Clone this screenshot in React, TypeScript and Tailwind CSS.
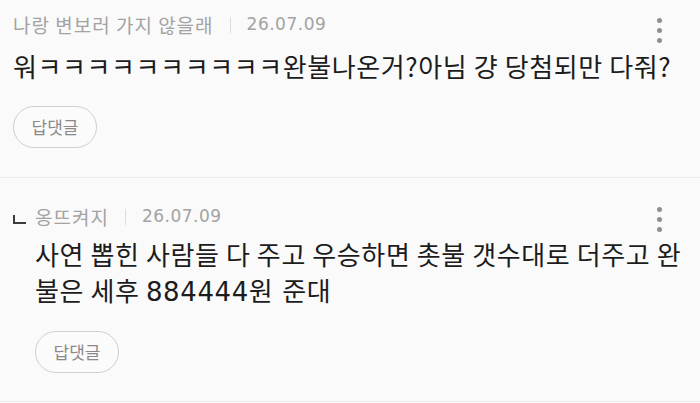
import React from "react";

const KR = { fontFamily: '"Noto Sans CJK KR", "Noto Sans", sans-serif' };
const NUM = { fontFamily: '"DejaVu Sans", "Noto Sans CJK KR", sans-serif' };

function Kebab({ top }: { top: string }) {
  return (
    <div className={`flex flex-col gap-[5px] ${top} mr-[38px]`}>
      <span className="block h-[5px] w-[5px] rounded-full bg-[#8f8f8f]" />
      <span className="block h-[5px] w-[5px] rounded-full bg-[#8f8f8f]" />
      <span className="block h-[5px] w-[5px] rounded-full bg-[#8f8f8f]" />
    </div>
  );
}

function ReplyButton() {
  return (
    <button className="flex h-[42px] w-[84px] items-center justify-center rounded-full border border-[#cfcfcf] bg-[#fbfbfb] text-[17px] text-[#8a8a8a]">
      답댓글
    </button>
  );
}

function Meta({ name, date, reply }: { name: string; date: string; reply?: boolean }) {
  return (
    <div className="flex items-center text-[19px] tracking-[1px] text-[#a3a3a3]">
      {reply && (
        // small reply marker drawn as an L corner
        <span className="mr-[9px] mt-[4px] block h-[9px] w-[13px] border-b-2 border-l-2 border-[#3c3c3c]" />
      )}
      <span>{name}</span>
      <span className="mx-[16px] h-[16px] w-px bg-[#dcdcdc]" />
      <span style={NUM} className="text-[17px] tracking-[0.5px]">
        {date}
      </span>
    </div>
  );
}

export default function App() {
  return (
    <div style={KR} className="h-[403px] w-[700px] overflow-hidden bg-[#fafafa]">
      <section className="border-b border-[#ececec] pl-[13px] pt-[11px] pb-[29px]">
        <div className="flex h-[28px] items-start justify-between">
          <div className="flex h-[28px] items-center">
            <Meta name="나랑 변보러 가지 않을래" date="26.07.09" />
          </div>
          <Kebab top="mt-[7px]" />
        </div>
        <p className="mt-[9px] whitespace-nowrap text-[26px] leading-[36px] tracking-[0.6px] text-[#1c1c1c]">
          워ㅋㅋㅋㅋㅋㅋㅋㅋㅋㅋ완불나온거?아님 걍 당첨되만 다줘?
        </p>
        <div className="mt-[22px]">
          <ReplyButton />
        </div>
      </section>

      <section className="border-b border-[#ececec] pl-[13px] pt-[25px] pb-[28px]">
        <div className="flex h-[28px] items-start justify-between">
          <div className="flex h-[28px] items-center">
            <Meta name="옹뜨켜지" date="26.07.09" reply />
          </div>
          <Kebab top="mt-[4px]" />
        </div>
        <div className="pl-[22px] pr-[6px]">
          <p className="mt-[5px] text-[26px] leading-[36px] tracking-[0.6px] text-[#1c1c1c]">
            사연 뽑힌 사람들 다 주고 우승하면 촛불 갯수대로 더주고 완불은 세후{" "}
            <span style={NUM}>884444원 준대</span>
          </p>
          <div className="mt-[21px]">
            <ReplyButton />
          </div>
        </div>
      </section>
    </div>
  );
}
